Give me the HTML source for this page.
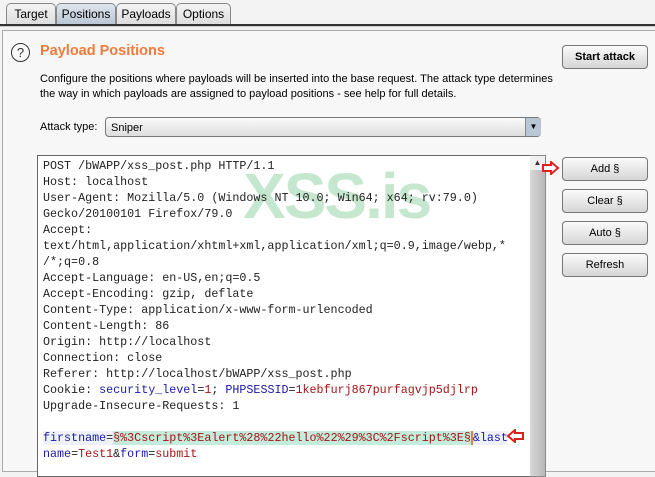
<!DOCTYPE html>
<html><head><style>
body{margin:0;width:655px;height:468px;overflow:hidden;background:#f3f3f3;font-family:"Liberation Sans",sans-serif;position:relative}
.tab{position:absolute;top:3px;height:21px;border:1px solid #888;border-bottom:none;border-radius:5px 5px 0 0;background:linear-gradient(#f4f4f4,#dcdcdc);font-size:12px;line-height:21px;text-align:center;color:#000}
.tab.sel{background:linear-gradient(#dfe6ee,#b9c6d4)}
.line{position:absolute;left:0;top:24px;width:655px;height:2px;background:#333}
.panel{position:absolute;left:2px;top:30px;width:660px;height:440px;border:1px solid #aaa;background:#f7f7f7}
.btn{position:absolute;left:562px;width:84px;height:22px;border:1px solid #777;border-radius:4px;background:linear-gradient(#fafafa,#d6d6d6);font-size:11px;line-height:22px;text-align:center}
.ed{position:absolute;left:37px;top:155px;width:493px;height:320px;border:1px solid #666;background:#fff;overflow:hidden}
.ed pre{margin:0;position:absolute;left:5px;top:2px;font-family:"Liberation Mono",monospace;font-size:11.7px;line-height:16px;color:#222}
.b{color:#1a1aa6}.r{color:#a31515}
.hl{background:#c3ecdc}
.sb{position:absolute;left:530px;top:155px;width:15px;height:320px;border:1px solid #888;border-left:none;background:linear-gradient(90deg,#d8d8d8,#b8b8b8)}
</style></head><body>
<div class="tab" style="left:6px;width:48px">Target</div>
<div class="tab sel" style="left:56px;width:58px">Positions</div>
<div class="tab" style="left:116px;width:58px">Payloads</div>
<div class="tab" style="left:176px;width:53px">Options</div>
<div class="line"></div>
<div style="position:absolute;left:0;top:26px;width:655px;height:1px;background:#ccc"></div>
<div class="panel"></div>
<div style="position:absolute;left:11px;top:43px;width:17px;height:17px;border:1px solid #333;border-radius:50%;font-size:13px;line-height:17px;text-align:center;color:#333">?</div>
<div style="position:absolute;left:40px;top:43px;font-size:14.5px;font-weight:bold;color:#f07a3c">Payload Positions</div>
<div style="position:absolute;left:40px;top:72px;font-size:11px;line-height:15px;color:#000;width:520px">Configure the positions where payloads will be inserted into the base request. The attack type determines the way in which payloads are assigned to payload positions - see help for full details.</div>
<div style="position:absolute;left:40px;top:121px;font-size:11px">Attack type:</div>
<div style="position:absolute;left:105px;top:117px;width:436px;height:20px;border:1px solid #777;border-radius:4px;background:linear-gradient(#fafafa,#dedede);font-size:11px;line-height:20px;padding-left:5px;box-sizing:border-box">Sniper</div>
<div style="position:absolute;left:525px;top:118px;width:15px;height:18px;background:#b9c6d4;border-left:1px solid #888;border-radius:0 3px 3px 0;font-size:8px;line-height:18px;text-align:center">▼</div>
<div class="btn" style="top:45px;font-weight:bold">Start attack</div>
<div class="ed"><div style="position:absolute;left:205px;top:3px;font-size:64px;font-weight:bold;color:#c6e7cf;letter-spacing:-2px">XSS.is</div>
<pre>POST /bWAPP/xss_post.php HTTP/1.1
Host: localhost
User-Agent: Mozilla/5.0 (Windows NT 10.0; Win64; x64; rv:79.0)
Gecko/20100101 Firefox/79.0
Accept:
text/html,application/xhtml+xml,application/xml;q=0.9,image/webp,*
/*;q=0.8
Accept-Language: en-US,en;q=0.5
Accept-Encoding: gzip, deflate
Content-Type: application/x-www-form-urlencoded
Content-Length: 86
Origin: http://localhost
Connection: close
Referer: http://localhost/bWAPP/xss_post.php
Cookie: <span class="b">security_level</span>=<span class="r">1</span>; <span class="b">PHPSESSID</span>=<span class="r">1kebfurj867purfagvjp5djlrp</span>
Upgrade-Insecure-Requests: 1

<span style="background:#eef0fa"><span class="b">firstname</span>=<span class="hl r">§%3Cscript%3Ealert%28%22hello%22%29%3C%2Fscript%3E§</span><span style="border-left:2px solid #f07a3c"></span><span class="b">&amp;last</span></span>
<span class="b">name</span>=<span class="r">Test1</span>&amp;<span class="b">form</span>=<span class="r">submit</span></pre></div>
<div class="sb"><div style="font-size:8px;text-align:center;color:#333;background:#f0f0f0;height:14px;line-height:14px">▲</div></div>
<svg style="position:absolute;left:541px;top:161px" width="20" height="14"><path d="M2 4h8V1l7 6-7 6V10H2z" fill="#fff" stroke="#e0201c" stroke-width="2"/></svg>
<svg style="position:absolute;left:505px;top:429px" width="20" height="14"><path d="M18 4h-8V1L3 7l7 6V10h8z" fill="#fff" stroke="#e0201c" stroke-width="2"/></svg>
<div class="btn" style="top:157px">Add §</div>
<div class="btn" style="top:189px">Clear §</div>
<div class="btn" style="top:221px">Auto §</div>
<div class="btn" style="top:253px">Refresh</div>
</body></html>
